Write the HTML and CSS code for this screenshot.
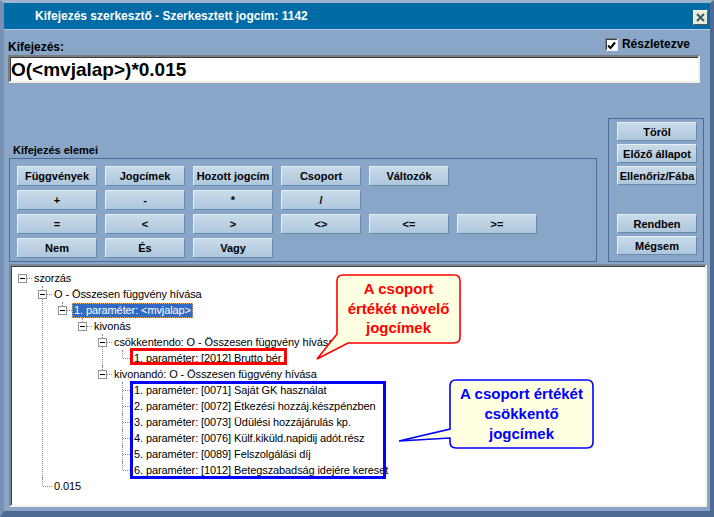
FILE: index.html
```html
<!DOCTYPE html>
<html lang="hu">
<head>
<meta charset="utf-8">
<title>Kifejezés szerkesztő</title>
<link rel="stylesheet" href="styles.css">
</head>
<body>
<div class="window">
  <div class="titlebar">
    <span class="title">Kifejezés szerkesztő - Szerkesztett jogcím: 1142</span>
    <button class="close" aria-label="Bezár">
      <svg width="9" height="9" viewBox="0 0 9 9"><path d="M1 1 L8 8 M8 1 L1 8" stroke="#2f5a66" stroke-width="2" fill="none"/></svg>
    </button>
  </div>
  <div class="client">
    <div class="expr-head">
      <span class="expr-label">Kifejezés:</span>
      <label class="chk">
        <span class="checkbox"><svg width="9" height="9" viewBox="0 0 9 9"><path d="M1 4.5 L3.5 7 L8 1.5" stroke="#000" stroke-width="2" fill="none"/></svg></span>
        <span>Részletezve</span>
      </label>
    </div>
    <div class="expr-input">O(&lt;mvjalap&gt;)*0.015</div>

    <div class="middle">
      <div class="elements">
        <div class="group-title">Kifejezés elemei</div>
        <div class="group-box">
          <div class="btn-row">
            <button class="btn">Függvények</button>
            <button class="btn">Jogcímek</button>
            <button class="btn">Hozott jogcím</button>
            <button class="btn">Csoport</button>
            <button class="btn">Változók</button>
          </div>
          <div class="btn-row">
            <button class="btn">+</button>
            <button class="btn">-</button>
            <button class="btn">*</button>
            <button class="btn">/</button>
          </div>
          <div class="btn-row">
            <button class="btn">=</button>
            <button class="btn">&lt;</button>
            <button class="btn">&gt;</button>
            <button class="btn">&lt;&gt;</button>
            <button class="btn">&lt;=</button>
            <button class="btn">&gt;=</button>
          </div>
          <div class="btn-row">
            <button class="btn">Nem</button>
            <button class="btn">És</button>
            <button class="btn">Vagy</button>
          </div>
        </div>
      </div>
      <div class="side-box">
        <button class="btn side">Töröl</button>
        <button class="btn side">Előző állapot</button>
        <button class="btn side">Ellenőriz/Fába</button>
        <button class="btn side gap-top">Rendben</button>
        <button class="btn side">Mégsem</button>
      </div>
    </div>

    <div class="tree-panel">
      <ul class="tree">
        <li>
          <div class="node"><span class="exp"></span><span class="label">szorzás</span></div>
          <ul>
            <li>
              <div class="node"><span class="exp"></span><span class="label">O - Összesen függvény hívása</span></div>
              <ul>
                <li>
                  <div class="node"><span class="exp"></span><span class="label sel">1. paraméter: &lt;mvjalap&gt;</span></div>
                  <ul>
                    <li>
                      <div class="node"><span class="exp"></span><span class="label">kivonás</span></div>
                      <ul>
                        <li>
                          <div class="node"><span class="exp"></span><span class="label">csökkentendo: O - Összesen függvény hívása</span></div>
                          <ul>
                            <li><div class="node"><span class="label">1. paraméter: [2012] Brutto bér</span></div></li>
                          </ul>
                        </li>
                        <li>
                          <div class="node"><span class="exp"></span><span class="label">kivonandó: O - Összesen függvény hívása</span></div>
                          <ul>
                            <li><div class="node"><span class="label">1. paraméter: [0071] Saját GK használat</span></div></li>
                            <li><div class="node"><span class="label">2. paraméter: [0072] Étkezési hozzáj.készpénzben</span></div></li>
                            <li><div class="node"><span class="label">3. paraméter: [0073] Üdülési hozzájárulás kp.</span></div></li>
                            <li><div class="node"><span class="label">4. paraméter: [0076] Külf.kiküld.napidij adót.rész</span></div></li>
                            <li><div class="node"><span class="label">5. paraméter: [0089] Felszolgálási díj</span></div></li>
                            <li><div class="node"><span class="label">6. paraméter: [1012] Betegszabadság idejére kereset</span></div></li>
                          </ul>
                        </li>
                      </ul>
                    </li>
                  </ul>
                </li>
              </ul>
            </li>
            <li><div class="node"><span class="label">0.015</span></div></li>
          </ul>
        </li>
      </ul>

      <div class="mark mark-red"></div>
      <div class="mark mark-blue"></div>

      <svg class="callout-shape callout-red-shape" width="160" height="95" viewBox="0 0 160 95">
        <path d="M32 4 H143 Q149 4 149 10 V66 Q149 72 143 72 H37 L6 88 L26 63 V10 Q26 4 32 4 Z" fill="#ffffe1" stroke="#ff0000" stroke-width="1.6"/>
      </svg>
      <div class="callout-text callout-red">A csoport<br>értékét növelő<br>jogcímek</div>

      <svg class="callout-shape callout-blue-shape" width="205" height="75" viewBox="0 0 205 75">
        <path d="M62 4 H193 Q199 4 199 10 V66 Q199 72 193 72 H62 Q56 72 56 66 V62 L5 65 L56 53 V10 Q56 4 62 4 Z" fill="#ffffe1" stroke="#0000ff" stroke-width="1.6"/>
      </svg>
      <div class="callout-text callout-blue">A csoport értékét<br>csökkentő<br>jogcímek</div>
    </div>
  </div>
</div>
</body>
</html>
```

FILE: styles.css
```css
* { box-sizing: border-box; }

html, body {
  margin: 0;
  padding: 0;
  background: #89a6c9;
}

body {
  font-family: "Liberation Sans", Arial, sans-serif;
  color: #000;
}

.window {
  width: 714px;
  height: 517px;
  background: #89a6c9;
  border-style: solid;
  border-width: 3px 4px 6px 4px;
  border-color: #9fb4cf #4e6a90 #4e6a90 #7890b2;
  display: flex;
  flex-direction: column;
}

.titlebar {
  height: 27px;
  flex: none;
  background: #006ba5;
  border-bottom: 1px solid #b9cde2;
  display: flex;
  justify-content: space-between;
  align-items: flex-start;
}

.title {
  color: #fff;
  font-weight: bold;
  font-size: 12px;
  line-height: 26px;
  padding-left: 31px;
  white-space: nowrap;
}

.close {
  margin: 7px 2px 0 0;
  width: 15px;
  height: 15px;
  padding: 0;
  background: #ece9d8;
  border: 1px solid;
  border-color: #ffffff #555 #555 #ffffff;
  display: flex;
  align-items: center;
  justify-content: center;
}

.client {
  flex: 1;
  display: flex;
  flex-direction: column;
}

.expr-head {
  margin-top: 6px;
  height: 18px;
  padding: 0 20px 0 4px;
  display: flex;
  justify-content: space-between;
}

.expr-label {
  align-self: flex-end;
  font-weight: bold;
  font-size: 12px;
  line-height: 14px;
}

.chk {
  margin-top: 2px;
  height: 13px;
  display: flex;
  align-items: center;
  gap: 4px;
  font-weight: bold;
  font-size: 12px;
  line-height: 13px;
}

.checkbox {
  width: 13px;
  height: 13px;
  background: #fff;
  border: 1px solid;
  border-color: #7f7f7f #f0f0f0 #f0f0f0 #7f7f7f;
  box-shadow: inset 1px 1px 0 #404040;
  display: flex;
  align-items: center;
  justify-content: center;
  padding: 1px 0 0 1px;
}

.expr-input {
  margin: 1px 0 0 4px;
  width: 692px;
  height: 28px;
  background: #fff;
  border: 2px solid;
  border-color: #7a7a7a #f1efe2 #f1efe2 #7a7a7a;
  box-shadow: inset 1px 1px 0 #3c3c3c;
  font-weight: bold;
  font-size: 19px;
  display: flex;
  align-items: center;
  padding-left: 1px;
  padding-top: 1px;
}

.middle {
  margin-top: 35px;
  height: 144px;
  display: flex;
}

.elements {
  margin-left: 5px;
  width: 588px;
  display: flex;
  flex-direction: column;
  justify-content: flex-end;
}

.group-title {
  font-weight: bold;
  font-size: 11px;
  line-height: 13px;
  padding-left: 4px;
  margin-bottom: 1px;
}

.group-box {
  height: 104px;
  border: 1px solid #4b6a94;
  padding: 7px 0 0 7px;
  display: flex;
  flex-direction: column;
  gap: 4px;
}

.btn-row {
  display: flex;
  gap: 8px;
}

.btn {
  width: 80px;
  height: 20px;
  padding: 0;
  font-family: "Liberation Sans", Arial, sans-serif;
  font-weight: bold;
  font-size: 11px;
  color: #000;
  background: linear-gradient(#c9dbea, #aec7dc);
  border: 1px solid;
  border-color: #e6eff7 #6a88a8 #6a88a8 #e6eff7;
  white-space: nowrap;
  overflow: visible;
}

.side-box {
  margin-left: 11px;
  width: 96px;
  height: 144px;
  border: 1px solid #4b6a94;
  padding: 3px 0 0 8px;
  display: flex;
  flex-direction: column;
  gap: 3px;
}

.btn.side {
  height: 19px;
}

.btn.gap-top {
  margin-top: 26px;
}

.tree-panel {
  position: relative;
  margin: 2px 0 0 5px;
  width: 698px;
  height: 243px;
  background: #fff;
  border: 2px solid;
  border-color: #7d8a96 #f5f3ea #f5f3ea #7d8a96;
  box-shadow: inset 1px 1px 0 #404040;
  overflow: hidden;
}

.tree, .tree ul {
  list-style: none;
  margin: 0;
  padding: 0;
}

.tree {
  padding: 4px 0 0 7px;
  font-family: "Liberation Sans", Arial, sans-serif;
  font-size: 11px;
  letter-spacing: -0.1px;
}

.tree ul {
  margin-left: 20px;
}

.tree li {
  position: relative;
}

.tree ul > li::before {
  content: "";
  position: absolute;
  left: 4px;
  top: 0;
  bottom: 0;
  border-left: 1px dotted #8a8a8a;
}

.tree ul > li:last-child::before {
  bottom: auto;
  height: 8px;
}

.node {
  position: relative;
  height: 16px;
  display: flex;
  align-items: center;
  padding-left: 16px;
  white-space: nowrap;
}

.node::before {
  content: "";
  position: absolute;
  left: 5px;
  top: 8px;
  width: 9px;
  border-top: 1px dotted #8a8a8a;
}

.exp {
  position: absolute;
  left: 0;
  top: 4px;
  width: 9px;
  height: 9px;
  border: 1px solid #8f9499;
  background: #fff;
  z-index: 1;
}

.exp::after {
  content: "";
  position: absolute;
  left: 1px;
  top: 3px;
  width: 5px;
  height: 1px;
  background: #000;
}

.label {
  line-height: 14px;
}

.label.sel {
  background: #316ac5;
  color: #fff;
  margin-left: -2px;
  padding: 0 1px;
  border: 1px dotted #e8b060;
  line-height: 13px;
}

.mark {
  position: absolute;
  border-style: solid;
  border-width: 3px;
}

.mark-red {
  left: 119px;
  top: 82px;
  width: 157px;
  height: 17px;
  border-color: #ff0000;
}

.mark-blue {
  left: 119px;
  top: 115px;
  width: 256px;
  height: 98px;
  border-color: #0000ff;
}

.callout-shape {
  position: absolute;
}

.callout-red-shape {
  left: 300px;
  top: 5px;
}

.callout-blue-shape {
  left: 383px;
  top: 110px;
}

.callout-text {
  position: absolute;
  text-align: center;
  font-family: "Liberation Sans", Arial, sans-serif;
  font-weight: bold;
  font-size: 15px;
  padding-top: 4px;
  white-space: nowrap;
}

.callout-red {
  left: 326px;
  top: 9px;
  width: 123px;
  height: 68px;
  line-height: 19.5px;
  color: #ff0000;
}

.callout-blue {
  left: 439px;
  top: 114px;
  width: 143px;
  height: 68px;
  line-height: 20px;
  color: #0000ff;
}
```
